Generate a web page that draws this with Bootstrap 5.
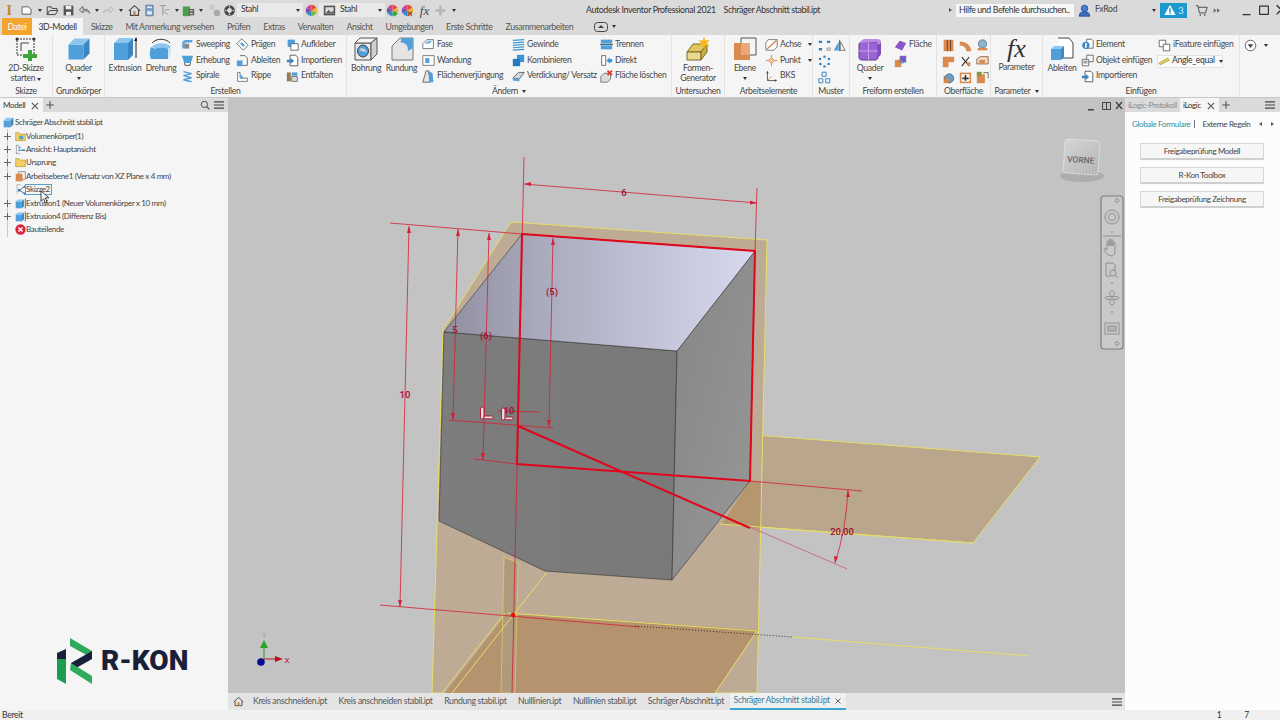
<!DOCTYPE html>
<html lang="de">
<head>
<meta charset="UTF-8">
<title>Autodesk Inventor Professional 2021</title>
<link href="https://cdn.jsdelivr.net/npm/bootstrap@5.3.0/dist/css/bootstrap.min.css" rel="stylesheet">
<style>
html, body { height: 100%; overflow: hidden; }
body { font-family: "Lato", "Liberation Sans", sans-serif; font-size: 8.6px; letter-spacing: -.3px; line-height: 1.1; color: #474747; background: #f0f0f0; }
.app-shell { width: 1280px; height: 720px; display: flex; flex-direction: column; overflow: hidden; }

/* title bar */
.title-row { height: 18px; flex: none; background: #dadada; display: grid; grid-template-columns: 465px 480px 1fr; align-items: center; padding-top: 1px; }
.qa-grid { display: grid; grid-template-columns: 18px 16px 11px 15px 17px 14px 11px 12px 13px 14px 16px 14px 12px 11px 13px 14px 16px 66px 1px 15px 66px 0 14px 17px 17px 15px 11px; align-items: center; justify-items: center; }
.qa-grid svg { width: 13px; height: 13px; }
.app-mark { font-family: "Liberation Serif", serif; font-weight: 700; font-size: 15px; line-height: 14px; color: #c9862e; }
.qa-fx { font-family: "Liberation Serif", serif; font-style: italic; font-size: 13px; line-height: 13px; letter-spacing: 0; }
.mat-box { width: 66px; height: 14px; background: #e9e9e9; display: flex; align-items: center; justify-content: space-between; padding: 0 3px 0 4px; justify-self: stretch; color: #333; }
.title-text { padding-left: 121px; display: flex; gap: 8px; font-size: 8.8px; letter-spacing: -.38px; color: #333; white-space: nowrap; }
.top-right { display: flex; align-items: center; height: 18px; color: #444; }
.search-hint { width: 118px; height: 13px; background: #f7f7f7; margin-left: 4px; padding-left: 3px; display: flex; align-items: center; font-size: 8.8px; letter-spacing: -.4px; color: #333; white-space: nowrap; }
.tri { display: inline-block; width: 0; height: 0; border-left: 2.5px solid transparent; border-right: 2.5px solid transparent; border-top: 3px solid #333; flex: none; }
.tri-r { border: 0; border-top: 2.5px solid transparent; border-bottom: 2.5px solid transparent; border-left: 3px solid #555; }
.tri-l { transform: scaleX(-1); }
.user-caret { margin-left: 35px; }
.alert-chip { width: 27px; height: 15px; background: #1c98cd; display: flex; align-items: center; justify-content: center; gap: 2px; color: #cfeaf7; font-size: 10px; }
.win-btns { margin-left: 19px; display: flex; gap: 3px; }
.win-btns svg { width: 14px; height: 14px; }

/* ribbon tabs */
.tab-row { height: 17px; flex: none; background: #dadada; display: flex; align-items: stretch; padding-left: 2px; font-size: 8.8px; letter-spacing: -.4px; color: #555; white-space: nowrap; }
.tab-file { width: 30px; background: #f2a42c; color: #fff; display: flex; align-items: center; justify-content: center; }
.tab-on { width: 51px; background: #f5f5f5; color: #333; display: flex; align-items: center; justify-content: center; margin-right: 8px; }
.tab-links { display: flex; gap: 13px; align-items: center; }

/* ribbon */
.ribbon { height: 63px; flex: none; background: #f5f5f5; border-bottom: 1px solid #c8c8c8; display: grid; grid-template-columns: 53px 52px 242px 325px 53px 88px 37px 87px 54px 52px 197px 1fr; }
.rb-panel { display: flex; flex-direction: column; border-right: 1px solid #e2e2e2; min-width: 0; }
.rb-panel:last-child { border-right: 0; }
.rb-body { height: 49px; flex: none; display: flex; align-items: stretch; white-space: nowrap; }
.rb-label { height: 13px; text-align: center; color: #444; display: flex; align-items: center; justify-content: center; gap: 4px; padding-top: 2px; }
.big-tool { display: flex; flex-direction: column; align-items: center; padding-top: 2px; flex: none; text-align: center; line-height: 10px; }
.big-tool svg { width: 24px; height: 24px; margin-bottom: 2px; }
.tool-col { display: flex; flex-direction: column; padding-top: 2px; flex: none; }
.tool-row { height: 16px; display: flex; align-items: center; gap: 2px; }
.tool-row svg { width: 13px; height: 13px; flex: none; }
.tool-row .tri { margin-left: 5px; }
.w-38 { width: 38px; } .w-40 { width: 40px; } .w-33 { width: 33px; } .w-32 { width: 32px; }
.c-181 { margin-left: 4px; width: 55px; } .c-236 { width: 50px; }
.c-fase { margin-left: 4px; width: 90px; } .c-gewinde { width: 88px; }
.c-insert { width: 77px; }
.ic-grid { display: grid; grid-template-columns: repeat(3, 17px); grid-auto-rows: 16px; align-items: center; justify-items: center; padding: 2px 0 0 3px; }
.ic-grid svg { width: 13px; height: 13px; }
.mu-grid { display: grid; grid-template-columns: 15px 15px; grid-auto-rows: 16px; align-items: center; justify-items: center; padding: 2px 0 0 4px; }
.mu-grid svg { width: 13px; height: 13px; }
.fx-big { font-family: "Liberation Serif", serif; font-style: italic; font-size: 26px; letter-spacing: 0; line-height: 24px; height: 25px; color: #333; }
.angle-box { width: 66px; height: 13px; border: 1px solid #e2e2e2; background: #fafafa; display: flex; align-items: center; gap: 2px; margin-left: -1px; color: #333; }
.angle-box svg { width: 12px; height: 10px; }
.angle-box .tri { margin-left: 2px; }

/* workspace */
.workspace { flex: 1; display: flex; min-height: 0; }
.browser-pane { width: 228px; flex: none; background: #f5f5f5; display: flex; flex-direction: column; font-size: 8px; letter-spacing: -.35px; }
.pane-head { height: 14px; flex: none; background: #dadada; display: flex; align-items: stretch; }
.pane-tab { background: #f5f5f5; display: flex; align-items: center; gap: 5px; padding: 1px 3px 0 3px; color: #333; }
.pane-tab svg, .pane-head svg { width: 10px; height: 10px; flex: none; }
.pane-add { display: flex; align-items: center; padding-left: 2px; }
.tree-list { padding: 4px 0 0 0; flex: 1; position: relative; }
.tree-row { height: 13.4px; display: flex; align-items: center; color: #444; white-space: nowrap; }
.tree-root { padding-left: 3px; gap: 1px; }
.tree-gutter { width: 15px; height: 100%; flex: none; display: flex; align-items: center; justify-content: center; background: linear-gradient(#c9c9c9, #c9c9c9) 7px 0 / 1px 100% no-repeat; }
.tree-plus { width: 7px; height: 7px; margin-right: 1px; background: linear-gradient(#666, #666) center / 7px 1px no-repeat, linear-gradient(#666, #666) center / 1px 7px no-repeat; }
.tree-row svg { width: 11px; height: 11px; flex: none; }
.tree-name { padding: 0 1px 0 0; }
.tree-hit { border: 1px solid #5a9ec9; line-height: 9px; margin-left: -1px; }
.mouse-pointer { position: absolute; left: 40px; top: 78px; width: 9px; height: 14px; }
.logo-wrap { display: flex; align-items: center; gap: 9px; padding: 0 0 26px 57px; color: #19213a; }
.logo-wrap svg { width: 35px; height: 46px; }
.logo-name { font-family: "Roboto", sans-serif; font-weight: 900; font-size: 28px; letter-spacing: 0; line-height: 1; }

.center-pane { flex: 1; min-width: 0; display: flex; flex-direction: column; }
.model-space { flex: 1; min-height: 0; background: #c3c3c3; letter-spacing: 0; }
.model-space svg { display: block; width: 100%; height: 100%; }
.doc-tabs { height: 17px; flex: none; background: #e4e4e4; display: flex; align-items: stretch; color: #555; white-space: nowrap; }
.doc-home { width: 21px; display: flex; align-items: center; justify-content: center; }
.doc-home svg { width: 11px; height: 11px; }
.doc-list { display: flex; align-items: center; gap: 11.500px; padding-left: 4px; }
.doc-on { align-self: stretch; background: #f0f0f0; border-bottom: 2px solid #3da6cf; color: #2f7f9d; display: flex; align-items: center; gap: 4px; padding: 0 4px; margin-left: -6px; }
.doc-on svg { width: 8px; height: 8px; }
.doc-menu { margin-left: auto; display: flex; align-items: center; padding-right: 3px; }
.doc-menu svg { width: 10px; height: 10px; }

.logic-pane { width: 155px; flex: none; background: #fcfcfc; display: flex; flex-direction: column; font-size: 8px; letter-spacing: -.35px; }
.logic-tab-off { color: #8a8a8a; display: flex; align-items: center; padding: 1px 3px 0; }
.logic-head-r { margin-left: auto; display: flex; align-items: center; padding-right: 5px; }
.logic-links { display: flex; align-items: center; height: 24px; padding-left: 7px; white-space: nowrap; }
.link-teal { color: #2f8f9f; }
.link-sep { width: 1px; height: 8px; background: #777; margin: 0 7px 0 4px; }
.link-arrows { display: flex; gap: 9px; margin-left: 9px; }
.logic-btns { display: flex; flex-direction: column; gap: 7px; padding: 7px 16px 0 15px; }
.logic-btn { font-size: 8px; letter-spacing: -.35px; line-height: 1; height: 17px; padding: 0; color: #444; background: #f6f6f6; border: 1px solid #d6d6d6; border-bottom: 2px solid #cfcfcf; border-radius: 1px; }

.status-row { height: 10px; flex: none; background: #f0f0f0; display: flex; color: #333; padding: 0 0 0 2px; line-height: 10px; }
.status-nums { margin-left: auto; display: flex; gap: 23px; padding-right: 31px; }
</style>
</head>
<body>
<svg class="d-none">
  <symbol id="cube" viewBox="0 0 16 16"><path fill="#4f9fdb" d="M1 5h10v10H1z"/><path fill="#8cc6ee" d="M1 5l4-4h10l-4 4z"/><path fill="#3a86c2" d="M11 5l4-4v10l-4 4z"/></symbol>
  <symbol id="doc" viewBox="0 0 16 16"><path fill="#fbfbfb" stroke="#444" d="M2.500 3.500h8l3 3v6h-11z"/></symbol>
  <symbol id="open" viewBox="0 0 16 16"><path fill="none" stroke="#444" stroke-width="1.200" d="M1.500 13V3.500h5l1 2h6V8M1.500 13l3-5h10l-3 5z"/></symbol>
  <symbol id="save" viewBox="0 0 16 16"><path fill="#555" d="M2 2h12v12H2z"/><path fill="#eee" d="M4.500 2.500h7v4h-7zM5 9.500h6V14H5z"/></symbol>
  <symbol id="undo" viewBox="0 0 16 16"><path fill="none" stroke="#666" stroke-width="1.200" d="M6 3L1.500 7 6 11V8.500h4c2 0 4 1 4 3 0-3-2-5-5-5H6z"/></symbol>
  <symbol id="redo" viewBox="0 0 16 16"><path fill="none" stroke="#bbb" stroke-width="1.200" d="M10 3l4.500 4L10 11V8.500H6c-2 0-4 1-4 3 0-3 2-5 5-5h3z"/></symbol>
  <symbol id="home" viewBox="0 0 16 16"><path fill="none" stroke="#444" stroke-width="1.300" d="M1 8.500L8 2l7 6.500M3 7.500V14h10V7.500"/><path fill="#c58a4a" d="M6.500 9h3v5h-3z"/></symbol>
  <symbol id="docblue" viewBox="0 0 16 16"><path fill="#7da5c9" stroke="#55718b" d="M3.500 1.500h9v13h-9z"/><path fill="#e5eef6" d="M5 3h6v2H5zM5 9h6v4H5z"/></symbol>
  <symbol id="figure" viewBox="0 0 16 16"><path fill="none" stroke="#9a9a9a" stroke-width="1.200" d="M2 2h8M6 2v12M6 8l6 5M9 7h5"/></symbol>
  <symbol id="greendoc" viewBox="0 0 16 16"><path fill="#4aa04a" d="M1 3h9v12H1z"/><path fill="#666" d="M8 6h7v8H8z"/><path fill="#fff" d="M10 8h3v1h-3zM10 11h3v1h-3z"/></symbol>
  <symbol id="fade" viewBox="0 0 16 16"><path fill="#c8c8c8" d="M2 1h6v6H2z"/><circle cx="11" cy="11" r="4" fill="#aaa"/></symbol>
  <symbol id="gear" viewBox="0 0 16 16"><circle cx="8" cy="8" r="6.500" fill="#444"/><circle cx="8" cy="8" r="3" fill="#ddd"/><g fill="#ddd"><circle cx="8" cy="3.500" r="1"/><circle cx="8" cy="12.500" r="1"/><circle cx="3.500" cy="8" r="1"/><circle cx="12.500" cy="8" r="1"/></g></symbol>
  <symbol id="wheel" viewBox="0 0 16 16"><path fill="#e8483c" d="M8 8V1a7 7 0 0 1 6 3.500z"/><path fill="#f2b32c" d="M8 8l6-3.500A7 7 0 0 1 14 11.500z"/><path fill="#7ab648" d="M8 8l6 3.500A7 7 0 0 1 8 15z"/><path fill="#2d8fd0" d="M8 8v7a7 7 0 0 1-6-3.500z"/><path fill="#7b4fa8" d="M8 8l-6 3.500a7 7 0 0 1 0-7z"/><path fill="#d4468c" d="M8 8L2 4.500A7 7 0 0 1 8 1z"/></symbol>
  <symbol id="matpic" viewBox="0 0 16 16"><path fill="#555" d="M1 2h14v12H1z"/><path fill="#ddd" d="M3 4h10v8H3z"/><path fill="#666" d="M3 12l4-5 3 3 3-2v4z"/></symbol>
  <symbol id="wheelplus" viewBox="0 0 16 16"><use href="#wheel"/><path fill="#2aa52a" d="M10 9h2v2h2v2h-2v2h-2v-2H8v-2h2z"/></symbol>
  <symbol id="wheelx" viewBox="0 0 16 16"><use href="#wheel"/><path fill="#b33" d="M9 9l2 2 2-2 1 1-2 2 2 2-1 1-2-2-2 2-1-1 2-2-2-2z"/></symbol>
  <symbol id="plusgrey" viewBox="0 0 16 16"><path fill="#b5b5b5" d="M6.500 2h3v4.500H14v3H9.500V14h-3V9.500H2v-3h4.500z"/></symbol>
  <symbol id="user" viewBox="0 0 16 16"><circle cx="8" cy="5.500" r="4" fill="#4a7fd0" stroke="#22468f"/><path fill="#3b6cc0" stroke="#22468f" d="M1.500 15c0-4 2.500-5.500 6.500-5.500s6.500 1.500 6.500 5.500z"/></symbol>
  <symbol id="warn" viewBox="0 0 16 16"><path fill="#fff" d="M8 1l7.500 13.500H.5z"/><path fill="#1c98cd" d="M7 5.500h2V11H7zM7 11.800h2v1.500H7z"/></symbol>
  <symbol id="cart" viewBox="0 0 16 16"><path fill="none" stroke="#333" d="M1 2h2.500l2 9h7.500l2-7H4"/><circle cx="6.500" cy="13.500" r="1" fill="#333"/><circle cx="12" cy="13.500" r="1" fill="#333"/></symbol>
  <symbol id="dblr" viewBox="0 0 16 16"><path fill="#666" d="M3 4l5 4-5 4zM9 4l5 4-5 4z"/></symbol>
  <symbol id="wmin" viewBox="0 0 16 16"><path fill="#333" d="M3 12.500h9v1.500H3z"/></symbol>
  <symbol id="wmax" viewBox="0 0 16 16"><path fill="none" stroke="#333" stroke-width="1.300" d="M3 3.500h10v9.500H3z"/></symbol>
  <symbol id="wclose" viewBox="0 0 16 16"><path fill="none" stroke="#333" stroke-width="1.600" d="M3 2.500l10.500 10.500M13.500 2.500L3 13"/></symbol>
  <symbol id="close-thin" viewBox="0 0 16 16"><path fill="none" stroke="#555" stroke-width="1.800" d="M3 3l10 10M13 3L3 13"/></symbol>
  <symbol id="plus-thin" viewBox="0 0 16 16"><path fill="none" stroke="#555" stroke-width="1.800" d="M8 2v12M2 8h12"/></symbol>
  <symbol id="find" viewBox="0 0 16 16"><circle cx="7" cy="7" r="5" fill="none" stroke="#444" stroke-width="1.500"/><path stroke="#444" stroke-width="1.800" d="M10.500 10.500L15 15"/></symbol>
  <symbol id="burger" viewBox="0 0 16 16"><path fill="#444" d="M0 2h16v1.800H0zM0 7h16v1.800H0zM0 12h16v1.800H0z"/></symbol>

  <symbol id="sk2d" viewBox="0 0 24 24"><path fill="none" stroke="#333" stroke-dasharray="2 1" d="M3 2h17v16H3z"/><path fill="none" stroke="#444" d="M7 14V6h8"/><circle cx="3" cy="2" r="1.500" fill="#333"/><circle cx="20" cy="2" r="1.500" fill="#333"/><path fill="#3aa63a" d="M14 13h4v4h5v4h-5v3h-4v-3H9v-4h5z"/></symbol>
  <symbol id="extrude" viewBox="0 0 24 24"><path fill="#4f9fdb" d="M1 6h14v17H1z"/><path fill="#8cc6ee" d="M1 6l5-5h14l-5 5z"/><path fill="#3a86c2" d="M15 6l5-5v17l-5 5z"/><path stroke="#222" fill="none" d="M23 21V2"/><path fill="#222" d="M23 0l-2 4h4z"/></symbol>
  <symbol id="revolve" viewBox="0 0 24 24"><path fill="#8cc6ee" d="M3 10c3-5 15-5 19 0l-3 2c-3-2-11-2-13 0z"/><path fill="#4f9fdb" d="M2 10l4 2c-.5 1 0 1 0 3v7H2c-2-4-1-9 0-12z"/><path fill="#4f9fdb" d="M6 12c3-2 10-2 13 0v10H6z"/><path fill="#cfe4f5" d="M19 12l3-2v7l-3 5z"/><path fill="none" stroke="#333" d="M3 6c4-5 14-5 18 0"/></symbol>
  <symbol id="sweep" viewBox="0 0 16 16"><path fill="none" stroke="#5aa5dc" stroke-width="3" d="M3 13V7c0-2 1-3 3-3h8"/><path fill="#888" d="M4 7h6v6H4z"/></symbol>
  <symbol id="loft" viewBox="0 0 16 16"><path fill="#4f9fdb" d="M1 2h14l-3 9H4z"/><path fill="none" stroke="#333" d="M4 11l1 3h6l1-3"/></symbol>
  <symbol id="coil" viewBox="0 0 16 16"><path fill="none" stroke="#4f9fdb" stroke-width="1.700" d="M3 2l10 2.500L3 7l10 2.500L3 12l10 2.500"/></symbol>
  <symbol id="emboss" viewBox="0 0 16 16"><path fill="#fff" stroke="#555" d="M1 7l6-6 8 8-6 6z"/><path fill="#5aa5dc" d="M5 7l2-2 4 4-2 2z"/></symbol>
  <symbol id="derive" viewBox="0 0 16 16"><path fill="none" stroke="#555" d="M5 2h6l3 3v9H8"/><path fill="#4f9fdb" d="M1 8h7v7H1z"/></symbol>
  <symbol id="rib" viewBox="0 0 16 16"><path fill="#fff" stroke="#666" d="M2 14V3h3v7h9v4z"/><path fill="#5aa5dc" d="M5 10V5l5 5z"/></symbol>
  <symbol id="decal" viewBox="0 0 16 16"><path fill="#4f9fdb" d="M2 2h9v9H2z"/><path fill="#fff" stroke="#555" d="M6 7h9v8H6z"/></symbol>
  <symbol id="import" viewBox="0 0 16 16"><path fill="#fff" stroke="#444" d="M5 1.500h7l2.500 2.500v10.500H5z"/><path fill="#3a86c2" d="M1 7h5V5l4 3.500-4 3.500v-2H1z"/></symbol>
  <symbol id="unfold" viewBox="0 0 16 16"><path fill="#9a7a55" d="M1 3h5v11H1z"/><path fill="#4f9fdb" d="M7 3h7v4H7z"/><path fill="#d9d9d9" stroke="#666" d="M7 8h7v6H7z"/></symbol>
  <symbol id="hole" viewBox="0 0 24 24"><path fill="#e9e9e9" stroke="#555" d="M1 6h16v17H1z"/><path fill="#f4f4f4" stroke="#555" d="M1 6l5-5h17l-6 5z"/><path fill="#d0d0d0" stroke="#555" d="M17 6l6-5v16l-6 6z"/><ellipse cx="9" cy="14" rx="5.500" ry="6" fill="#4f9fdb" stroke="#444"/><path fill="#d0d0d0" d="M5 13c2-3 6-2 8 2-3 0-5-1-8-2z"/></symbol>
  <symbol id="fillet" viewBox="0 0 24 24"><path fill="#e4e4e4" stroke="#777" d="M2 9L10 1h13v22H2z"/><path fill="#5aa5dc" d="M11 1h12v8c0-4-2-4-5-3s-8-1-7-5z"/><path fill="#4f9fdb" d="M14 1c6-.5 9 4 9 10l-5 3c0-6-2-8-8-9z"/></symbol>
  <symbol id="chamfer" viewBox="0 0 16 16"><path fill="#fff" stroke="#666" d="M1 7l5-5h8v11H1z"/><path fill="#7db7e3" d="M3 7l4-3.500h6L9 7z"/></symbol>
  <symbol id="shell" viewBox="0 0 16 16"><path fill="#fff" stroke="#666" d="M1 2h14v12H1z"/><path fill="#4f9fdb" d="M4 5h5v6H4z"/></symbol>
  <symbol id="draft" viewBox="0 0 16 16"><path fill="#e4e4e4" stroke="#555" d="M1 15L5 1h3l2 14z"/><path fill="#4f9fdb" d="M8 1l5 3 1 11h-4z"/></symbol>
  <symbol id="thread" viewBox="0 0 16 16"><path fill="none" stroke="#3f93d0" stroke-width="1.500" d="M1 3l14-1M1 6l14-1M1 9l14-1M1 12l14-1M1 15l14-1"/></symbol>
  <symbol id="combine" viewBox="0 0 16 16"><path fill="#3a94d8" d="M6 1h9v9H6z"/><path fill="#2479bd" d="M1 6h9v9H1z"/></symbol>
  <symbol id="thicken" viewBox="0 0 16 16"><path fill="#cfd9e2" stroke="#555" d="M1 10l7-7h7l-6 8z"/><path fill="#5aa5dc" d="M1 10l8 1v3l-8-1z"/></symbol>
  <symbol id="split" viewBox="0 0 16 16"><path fill="#4f9fdb" d="M1 2h14v5H1z"/><path fill="#444" d="M0 7.500h16v1H0z"/><path fill="#4f9fdb" d="M1 9h14v5H1z"/></symbol>
  <symbol id="direct" viewBox="0 0 16 16"><path fill="#fff" stroke="#555" d="M2 2h5v12H2z"/><path fill="#3a94d8" d="M8 8l4-4v2h3v4h-3v2z"/></symbol>
  <symbol id="delface" viewBox="0 0 16 16"><path fill="#ddd" stroke="#666" d="M1 8l4-4h8v7l-4 4H1z"/><path fill="#d9342b" d="M10 0l2 2 2-2 1.500 1.500-2 2 2 2L14 7l-2-2-2 2-1.500-1.500 2-2-2-2z"/></symbol>
  <symbol id="shapegen" viewBox="0 0 24 24"><path fill="#e0c75e" stroke="#7a6a2a" d="M1 15l6-8h14l-6 8z"/><path fill="#e9d98e" stroke="#7a6a2a" d="M1 15h14v8H1z"/><path fill="#c9ae46" stroke="#7a6a2a" d="M15 15l6-8v8l-6 8z"/><path fill="#f5b81e" d="M18 0l1.500 3.500L23.500 3 21 6l2.500 3-4-.5L18 12l-1.500-3.500-4 .5L15 6l-2.500-3 4 .5z"/></symbol>
  <symbol id="plane" viewBox="0 0 24 24"><path fill="none" stroke="#555" d="M8 1h15v17H8z"/><path fill="#db8a4f" d="M1 6h16v17H1z"/><path fill="#eba87a" d="M8 6h9v12H8z"/></symbol>
  <symbol id="axis" viewBox="0 0 16 16"><path fill="#fff" stroke="#666" d="M4 2h11v9L11 15H1V6z"/><path stroke="#d57a3d" stroke-width="1.500" d="M2 14L14 3"/></symbol>
  <symbol id="point" viewBox="0 0 16 16"><path fill="none" stroke="#d98a4c" stroke-width="1.200" d="M8 1v14M1 8h14"/><path fill="#efc4a0" stroke="#d98a4c" d="M8 4l4 4-4 4-4-4z"/></symbol>
  <symbol id="ucs" viewBox="0 0 16 16"><path fill="none" stroke="#444" d="M3 13V3M3 13h10"/><path fill="#444" d="M3 1L1.500 4h3zM15 13l-3-1.500v3z"/><path stroke="#d57a3d" d="M3 13l5-5"/></symbol>
  <symbol id="rect-pat" viewBox="0 0 16 16"><g fill="#2e7fc0"><path d="M1 2h4v3H1zM11 2h4v3h-4zM1 11h4v3H1z"/></g><path fill="#ddd" stroke="#999" d="M11 11h4v3h-4z"/></symbol>
  <symbol id="mirror" viewBox="0 0 16 16"><path fill="#4f9fdb" d="M1 14L7 3v11z"/><path fill="none" stroke="#666" d="M9 14V3l6 11z"/><path stroke="#555" d="M8 1v14"/></symbol>
  <symbol id="circ-pat" viewBox="0 0 16 16"><g fill="#2e7fc0"><circle cx="8" cy="2" r="1.500"/><circle cx="13.500" cy="5" r="1.500"/><circle cx="2.500" cy="5" r="1.500"/><circle cx="13" cy="11" r="1.500"/><circle cx="3" cy="11" r="1.500"/><circle cx="8" cy="14" r="1.500"/></g></symbol>
  <symbol id="sk-pat" viewBox="0 0 16 16"><path fill="none" stroke="#3a86c2" stroke-width="1.200" d="M5 1.500h5v5H5zM1 9.500h5v5H1zM9.500 9.500h5v5h-5z"/></symbol>
  <symbol id="free" viewBox="0 0 24 24"><path fill="#9b63d6" stroke="#5a3a8a" d="M1 8c0-2 1-3 3-3h13c2 0 3 1 3 3v12c0 2-1 3-3 3H4c-2 0-3-1-3-3z"/><path fill="#b98be4" d="M2 6c1-3 3-4 5-4h12c3 0 4 1 4 3L20 7c0-1-1-2-3-2z"/><path fill="#7f4cc0" d="M20 8l3-3v11c0 2-1 3-3 4z"/><path stroke="#c9a6ec" d="M10.500 5v18M1 14h19"/></symbol>
  <symbol id="ff-face" viewBox="0 0 16 16"><path fill="#8a55c8" d="M1 10l6-8 8 3-5 9z"/></symbol>
  <symbol id="ff-conv" viewBox="0 0 16 16"><path fill="#8a55c8" d="M7 1h8v8H7z"/><path fill="#db8a4f" d="M1 6h8v9H1z"/><circle cx="10" cy="7" r="3" fill="none" stroke="#2a7fb8"/></symbol>
  <symbol id="sf1" viewBox="0 0 16 16"><path fill="#d98a50" d="M2 1h12v14H2z"/><path fill="#5d3a1c" d="M6 1h1v14H6zM10 1h1v14h-1z"/></symbol>
  <symbol id="sf2" viewBox="0 0 16 16"><path fill="#d98a50" d="M1 3c8 0 14 5 14 12h-6C9 11 6 8 1 8z"/></symbol>
  <symbol id="sf3" viewBox="0 0 16 16"><circle cx="8" cy="6" r="5" fill="#8fb5c9" stroke="#5a7a8c"/><path fill="#d98a50" d="M2 11h12v3H2z"/></symbol>
  <symbol id="sf4" viewBox="0 0 16 16"><path fill="#d98a50" d="M1 2h14v7H8v6H1z"/></symbol>
  <symbol id="sf5" viewBox="0 0 16 16"><path fill="#333" d="M4 2l4 5 4-5 1 1-4 5 4 5-1 1-4-5-4 5-1-1 4-5-4-5z"/><path fill="#d98a50" d="M10 9h4v4h-4z"/></symbol>
  <symbol id="sf6" viewBox="0 0 16 16"><path fill="#f0d9c5" stroke="#8a5a30" d="M1 5l4-3h10v9H1z"/><path fill="#d98a50" d="M4 6h7v4H4z"/></symbol>
  <symbol id="sf7" viewBox="0 0 16 16"><path fill="#d98a50" d="M2 6h8v9H2z"/><circle cx="9" cy="9" r="5.500" fill="#6a9ec7" stroke="#3d6f94"/><path fill="#d98a50" d="M4 9h5v5H4z"/></symbol>
  <symbol id="sf8" viewBox="0 0 16 16"><path fill="#d98a50" d="M1 2h14v13H1z"/><path fill="#fff" d="M3 4h10v9H3z"/><path fill="#333" d="M7 5h2v3h3v2H9v2H7v-2H4V8h3z"/></symbol>
  <symbol id="sf9" viewBox="0 0 16 16"><path fill="#d98a50" d="M1 4h10v11H1z"/><path fill="#7d9b3a" d="M1 1h6v5H1z"/><path fill="none" stroke="#555" d="M9 2h6v7"/></symbol>
  <symbol id="derive-l" viewBox="0 0 24 24"><path fill="#fff" stroke="#444" d="M8 1h11l4 5v15H10"/><path fill="#4f9fdb" d="M1 12h10v11H1z"/><path fill="#8cc6ee" d="M1 12l3-3h10l-3 3z"/><path fill="#3a86c2" d="M11 12l3-3v11l-3 3z"/></symbol>
  <symbol id="element" viewBox="0 0 16 16"><path fill="#fff" stroke="#555" d="M7 1.500h6l2 2v9H7z"/><circle cx="6" cy="9" r="4.500" fill="#3a86c2"/><path fill="#fff" d="M5 6h2v6H5z"/></symbol>
  <symbol id="object" viewBox="0 0 16 16"><path fill="#fff" stroke="#555" d="M7 1.500h8v8H7z"/><path fill="#fff" stroke="#555" d="M1.500 6.500h8v8h-8z"/><path stroke="#555" d="M3 9h5M3 11h5"/></symbol>
  <symbol id="ifeature" viewBox="0 0 16 16"><path fill="#fff" stroke="#555" d="M1.500 1.500h8v8h-8z"/><path fill="#fff" stroke="#555" d="M6.500 6.500h8v8h-8z"/></symbol>
  <symbol id="ruler" viewBox="0 0 16 12"><path fill="#e4d45c" stroke="#a8983a" d="M1 9l12-7 2 3-12 6z"/></symbol>
  <symbol id="more" viewBox="0 0 16 16"><circle cx="8" cy="8" r="6.500" fill="#fff" stroke="#444"/><path fill="#444" d="M4.500 6.500h7L8 11z"/></symbol>

  <symbol id="folder" viewBox="0 0 16 16"><path fill="#f0cf63" stroke="#b7973e" d="M1 14V2.500h5l1.500 2h7.500V14z"/></symbol>
  <symbol id="solids" viewBox="0 0 16 16"><use href="#folder"/><path fill="#4f9fdb" d="M6 7h6v5H6z"/></symbol>
  <symbol id="view" viewBox="0 0 16 16"><path fill="none" stroke="#555" stroke-dasharray="2 1" d="M2 2h4M2 2v12h5"/><path fill="#3a86c2" d="M5 4h3v2H5zM9 8h6v2H9zM5 8h3v2H5z"/></symbol>
  <symbol id="wplane" viewBox="0 0 16 16"><path fill="none" stroke="#666" d="M5 1h10v11H5z"/><path fill="#db8a4f" d="M1 4h10v11H1z"/></symbol>
  <symbol id="sketch" viewBox="0 0 16 16"><path fill="none" stroke="#777" stroke-dasharray="2 1" d="M3 1h6M3 1v13"/><path fill="none" stroke="#2e6ea6" stroke-width="1.300" d="M6 9l8-5M6 9l8 5"/><circle cx="6" cy="9" r="1.800" fill="#2e6ea6"/><circle cx="14" cy="4" r="1.600" fill="#2e6ea6"/><circle cx="14" cy="14" r="1.600" fill="#2e6ea6"/></symbol>
  <symbol id="extr-tree" viewBox="0 0 16 16"><path fill="#4f9fdb" d="M1 5h9v10H1z"/><path fill="#8cc6ee" d="M1 5l3-3h9l-3 3z"/><path fill="#3a86c2" d="M10 5l3-3v10l-3 3z"/><path stroke="#222" d="M15 15V1"/></symbol>
  <symbol id="endpart" viewBox="0 0 16 16"><circle cx="8" cy="8" r="7.500" fill="#d7263d"/><path stroke="#fff" stroke-width="2" d="M5 5l6 6M11 5l-6 6"/></symbol>
  <symbol id="ptr" viewBox="0 0 10 16"><path fill="#fff" stroke="#222" d="M1 1v12l3-3 2 5 2-1-2-5h4z"/></symbol>
  <symbol id="rkon" viewBox="0 0 35 46"><path fill="#2dab5b" d="M13 0L35 13V20L13 8z"/><path fill="#19213a" d="M35 13V21L14 33V25z"/><path fill="#2dab5b" d="M14 25L35 38V46L13 32z"/><path fill="#19213a" d="M0 15L9 11V21H0z"/><path fill="#1c9e50" d="M0 21H9V46L0 41z"/></symbol>
</svg>

<div class="app-shell">

  <div class="title-row">
    <div class="qa-grid">
      <span class="app-mark">I</span>
      <svg><use href="#doc"/></svg><span class="tri"></span>
      <svg><use href="#open"/></svg>
      <svg><use href="#save"/></svg>
      <svg><use href="#undo"/></svg><span class="tri"></span>
      <svg><use href="#redo"/></svg><span class="tri"></span>
      <svg><use href="#home"/></svg>
      <svg><use href="#docblue"/></svg>
      <svg><use href="#figure"/></svg><span class="tri"></span>
      <svg><use href="#greendoc"/></svg><span class="tri"></span>
      <svg><use href="#fade"/></svg>
      <svg><use href="#gear"/></svg>
      <div class="mat-box"><span>Stahl</span><span class="tri"></span></div>
      <span></span>
      <svg><use href="#wheel"/></svg>
      <div class="mat-box"><svg><use href="#matpic"/></svg><span class="me-auto ms-1">Stahl</span><span class="tri"></span></div>
      <span></span>
      <svg><use href="#wheelplus"/></svg>
      <svg><use href="#wheelx"/></svg>
      <span class="qa-fx">fx</span>
      <svg><use href="#plusgrey"/></svg>
      <span class="tri"></span>
    </div>
    <div class="title-text"><span>Autodesk Inventor Professional 2021</span><span>Schräger Abschnitt stabil.ipt</span></div>
    <div class="top-right">
      <span class="tri tri-r ms-1"></span>
      <div class="search-hint">Hilfe und Befehle durchsuchen..</div>
      <svg class="ms-1" width="13" height="13"><use href="#user"/></svg>
      <span class="ms-1">FxRod</span>
      <span class="tri user-caret"></span>
      <div class="alert-chip ms-1"><svg width="12" height="12"><use href="#warn"/></svg>3</div>
      <svg class="ms-2" width="13" height="13"><use href="#cart"/></svg>
      <svg class="ms-1" width="9" height="9"><use href="#dblr"/></svg>
      <div class="win-btns"><svg><use href="#wmin"/></svg><svg><use href="#wmax"/></svg><svg><use href="#wclose"/></svg></div>
    </div>
  </div>

  <div class="tab-row">
    <div class="tab-file">Datei</div>
    <div class="tab-on">3D-Modell</div>
    <div class="tab-links">
      <span>Skizze</span><span>Mit Anmerkung versehen</span><span>Prüfen</span><span>Extras</span><span>Verwalten</span><span>Ansicht</span><span>Umgebungen</span><span>Erste Schritte</span><span>Zusammenarbeiten</span>
      <span class="d-flex align-items-center gap-1 ms-2"><svg width="14" height="10" viewBox="0 0 14 10"><rect x=".5" y=".5" width="13" height="9" rx="3" fill="none" stroke="#444"/><path fill="#444" d="M4 6h6L7 3z"/></svg><span class="tri"></span></span>
    </div>
  </div>

  <div class="ribbon">
    <div class="rb-panel">
      <div class="rb-body justify-content-center"><div class="big-tool"><svg><use href="#sk2d"/></svg><span>2D-Skizze</span><span>starten <span class="tri"></span></span></div></div>
      <div class="rb-label">Skizze</div>
    </div>
    <div class="rb-panel">
      <div class="rb-body justify-content-center"><div class="big-tool"><svg><use href="#cube"/></svg><span>Quader</span><span class="tri mt-1"></span></div></div>
      <div class="rb-label">Grundkörper</div>
    </div>
    <div class="rb-panel">
      <div class="rb-body">
        <div class="big-tool w-40"><svg><use href="#extrude"/></svg><span>Extrusion</span></div>
        <div class="big-tool w-32"><svg><use href="#revolve"/></svg><span>Drehung</span></div>
        <div class="tool-col c-181">
          <div class="tool-row"><svg><use href="#sweep"/></svg>Sweeping</div>
          <div class="tool-row"><svg><use href="#loft"/></svg>Erhebung</div>
          <div class="tool-row"><svg><use href="#coil"/></svg>Spirale</div>
        </div>
        <div class="tool-col c-236">
          <div class="tool-row"><svg><use href="#emboss"/></svg>Prägen</div>
          <div class="tool-row"><svg><use href="#derive"/></svg>Ableiten</div>
          <div class="tool-row"><svg><use href="#rib"/></svg>Rippe</div>
        </div>
        <div class="tool-col">
          <div class="tool-row"><svg><use href="#decal"/></svg>Aufkleber</div>
          <div class="tool-row"><svg><use href="#import"/></svg>Importieren</div>
          <div class="tool-row"><svg><use href="#unfold"/></svg>Entfalten</div>
        </div>
      </div>
      <div class="rb-label">Erstellen</div>
    </div>
    <div class="rb-panel">
      <div class="rb-body">
        <div class="big-tool w-38"><svg><use href="#hole"/></svg><span>Bohrung</span></div>
        <div class="big-tool w-33"><svg><use href="#fillet"/></svg><span>Rundung</span></div>
        <div class="tool-col c-fase">
          <div class="tool-row"><svg><use href="#chamfer"/></svg>Fase</div>
          <div class="tool-row"><svg><use href="#shell"/></svg>Wandung</div>
          <div class="tool-row"><svg><use href="#draft"/></svg>Flächenverjüngung</div>
        </div>
        <div class="tool-col c-gewinde">
          <div class="tool-row"><svg><use href="#thread"/></svg>Gewinde</div>
          <div class="tool-row"><svg><use href="#combine"/></svg>Kombinieren</div>
          <div class="tool-row"><svg><use href="#thicken"/></svg>Verdickung/ Versatz</div>
        </div>
        <div class="tool-col">
          <div class="tool-row"><svg><use href="#split"/></svg>Trennen</div>
          <div class="tool-row"><svg><use href="#direct"/></svg>Direkt</div>
          <div class="tool-row"><svg><use href="#delface"/></svg>Fläche löschen</div>
        </div>
      </div>
      <div class="rb-label">Ändern <span class="tri"></span></div>
    </div>
    <div class="rb-panel">
      <div class="rb-body justify-content-center"><div class="big-tool"><svg><use href="#shapegen"/></svg><span>Formen-</span><span>Generator</span></div></div>
      <div class="rb-label">Untersuchen</div>
    </div>
    <div class="rb-panel">
      <div class="rb-body">
        <div class="big-tool w-40"><svg><use href="#plane"/></svg><span>Ebene</span><span class="tri mt-1"></span></div>
        <div class="tool-col">
          <div class="tool-row"><svg><use href="#axis"/></svg>Achse<span class="tri"></span></div>
          <div class="tool-row"><svg><use href="#point"/></svg>Punkt<span class="tri"></span></div>
          <div class="tool-row"><svg><use href="#ucs"/></svg>BKS</div>
        </div>
      </div>
      <div class="rb-label">Arbeitselemente</div>
    </div>
    <div class="rb-panel">
      <div class="rb-body"><div class="mu-grid"><svg><use href="#rect-pat"/></svg><svg><use href="#mirror"/></svg><svg><use href="#circ-pat"/></svg><span></span><svg><use href="#sk-pat"/></svg></div></div>
      <div class="rb-label">Muster</div>
    </div>
    <div class="rb-panel">
      <div class="rb-body">
        <div class="big-tool w-40"><svg><use href="#free"/></svg><span>Quader</span><span class="tri mt-1"></span></div>
        <div class="tool-col ms-1">
          <div class="tool-row"><svg><use href="#ff-face"/></svg>Fläche</div>
          <div class="tool-row"><svg><use href="#ff-conv"/></svg></div>
        </div>
      </div>
      <div class="rb-label">Freiform erstellen</div>
    </div>
    <div class="rb-panel">
      <div class="rb-body"><div class="ic-grid">
        <svg><use href="#sf1"/></svg><svg><use href="#sf2"/></svg><svg><use href="#sf3"/></svg>
        <svg><use href="#sf4"/></svg><svg><use href="#sf5"/></svg><svg><use href="#sf6"/></svg>
        <svg><use href="#sf7"/></svg><svg><use href="#sf8"/></svg><svg><use href="#sf9"/></svg>
      </div></div>
      <div class="rb-label">Oberfläche</div>
    </div>
    <div class="rb-panel">
      <div class="rb-body justify-content-center"><div class="big-tool"><span class="fx-big">fx</span><span>Parameter</span></div></div>
      <div class="rb-label">Parameter <span class="tri"></span></div>
    </div>
    <div class="rb-panel">
      <div class="rb-body">
        <div class="big-tool w-38"><svg><use href="#derive-l"/></svg><span>Ableiten</span></div>
        <div class="tool-col c-insert">
          <div class="tool-row"><svg><use href="#element"/></svg>Element</div>
          <div class="tool-row"><svg><use href="#object"/></svg>Objekt einfügen</div>
          <div class="tool-row"><svg><use href="#import"/></svg>Importieren</div>
        </div>
        <div class="tool-col">
          <div class="tool-row"><svg><use href="#ifeature"/></svg>iFeature einfügen</div>
          <div class="tool-row"><div class="angle-box"><svg><use href="#ruler"/></svg>Angle_equal<span class="tri"></span></div></div>
        </div>
      </div>
      <div class="rb-label">Einfügen</div>
    </div>
    <div class="rb-panel">
      <div class="rb-body"><div class="tool-col ms-1"><div class="tool-row"><svg><use href="#more"/></svg><span class="tri"></span></div></div></div>
    </div>
  </div>

  <div class="workspace">
    <div class="browser-pane">
      <div class="pane-head">
        <div class="pane-tab">Modell <svg><use href="#close-thin"/></svg></div>
        <div class="pane-add"><svg><use href="#plus-thin"/></svg></div>
        <div class="ms-auto d-flex align-items-center gap-1 pe-1"><svg><use href="#find"/></svg><svg><use href="#burger"/></svg></div>
      </div>
      <div class="tree-list">
        <div class="tree-row tree-root"><svg><use href="#cube"/></svg><span>Schräger Abschnitt stabil.ipt</span></div>
        <div class="tree-row"><div class="tree-gutter"><span class="tree-plus"></span></div><svg><use href="#solids"/></svg><span class="tree-name">Volumenkörper(1)</span></div>
        <div class="tree-row"><div class="tree-gutter"><span class="tree-plus"></span></div><svg><use href="#view"/></svg><span class="tree-name">Ansicht: Hauptansicht</span></div>
        <div class="tree-row"><div class="tree-gutter"><span class="tree-plus"></span></div><svg><use href="#folder"/></svg><span class="tree-name">Ursprung</span></div>
        <div class="tree-row"><div class="tree-gutter"><span class="tree-plus"></span></div><svg><use href="#wplane"/></svg><span class="tree-name">Arbeitsebene1 (Versatz von XZ Plane x 4 mm)</span></div>
        <div class="tree-row"><div class="tree-gutter"></div><svg><use href="#sketch"/></svg><span class="tree-name tree-hit">Skizze2</span></div>
        <div class="tree-row"><div class="tree-gutter"><span class="tree-plus"></span></div><svg><use href="#extr-tree"/></svg><span class="tree-name">Extrusion1 (Neuer Volumenkörper x 10 mm)</span></div>
        <div class="tree-row"><div class="tree-gutter"><span class="tree-plus"></span></div><svg><use href="#extr-tree"/></svg><span class="tree-name">Extrusion4 (Differenz Bis)</span></div>
        <div class="tree-row"><div class="tree-gutter"></div><svg><use href="#endpart"/></svg><span class="tree-name">Bauteilende</span></div>
        <svg class="mouse-pointer"><use href="#ptr"/></svg>
      </div>
      <div class="logo-wrap"><svg><use href="#rkon"/></svg><span class="logo-name">R-KON</span></div>
    </div>

    <div class="center-pane">
      <div class="model-space">
        <svg viewBox="228 98 897 595">
          <defs>
            <linearGradient id="gTop" x1="0" y1="0" x2="1" y2="0"><stop offset="0" stop-color="#8f8fa0"/><stop offset=".35" stop-color="#adadc0"/><stop offset="1" stop-color="#d8d9ee"/></linearGradient>
            <linearGradient id="gFront" x1="0" y1="0" x2="1" y2="0"><stop offset="0" stop-color="#7d7d7d"/><stop offset="1" stop-color="#797979"/></linearGradient>
            <linearGradient id="gRight" x1="0" y1="0" x2="1" y2="1"><stop offset="0" stop-color="#858586"/><stop offset="1" stop-color="#989899"/></linearGradient>
            <linearGradient id="gCube" x1="0" y1="0" x2="1" y2="1"><stop offset="0" stop-color="#d4d4d4"/><stop offset="1" stop-color="#b6b6b6"/></linearGradient>
          </defs>
          <rect x="228" y="98" width="897" height="595" fill="#c3c3c3"/>

          <!-- Arbeitsebenen -->
          <polygon points="755,435 1040,457 973,543 757,527" fill="#b9a68d" stroke="#e6de66"/>
          <polygon points="443,330 511,222 767,240 757,693 432,693" fill="#bdab95" stroke="#e6de66"/>
          <polygon points="507,613 757,630 715,693 445,693" fill="#b5936f"/>
          <polygon points="504,557 518,563 515,693 501,693" fill="#b09a7d" stroke="#e6de66" stroke-width=".6"/>
          <polygon points="750,481 761,482 760,529 722,524" fill="#b5966f"/>
          <path fill="none" stroke="#e6de66" d="M720 524L973 543M547 572L452 693M505 613L442 693M507 613L757 631L715 693"/>
          <path fill="none" stroke="#e6de66" d="M792 637L1030 656"/>

          <!-- Körper -->
          <polygon points="444,332 677,351 672,580 545,571 439,521" fill="url(#gFront)" stroke="#333" stroke-width=".6"/>
          <polygon points="677,351 755,251 750,481 672,580" fill="url(#gRight)" stroke="#333" stroke-width=".6"/>
          <polygon points="522,234 755,251 677,351 444,332" fill="url(#gTop)" stroke="#333" stroke-width=".6"/>

          <!-- Skizze -->
          <g fill="none" stroke="#d42035" stroke-width=".8">
            <path d="M524 157L512 693M757 188L755 251M390 223L522 234M449 420L553 428M474 459L517 464M750 481L862 491"/>
            <path d="M524 184L757 203M409 226L400 607M458 229L453 420M489 233L483 460M553 238L549 427M497 411L540 412M380 605L640 627"/>
            <path stroke="#c85a7a" d="M750 527L847 569"/>
            <path d="M848 490Q846 530 835 563"/>
          </g>
          <path d="M635 626L792 637" fill="none" stroke="#3a3020" stroke-width="1" stroke-dasharray="1 2"/>
          <g fill="#d42035">
            <path d="M524 184l7 -2v4zM757 203l-7 -2.500v4zM409 226l-2 7h4zM400 607l-2 -7h4zM458 229l-2 7h4zM453 420l-2 -7h4zM489 233l-2 7h4zM483 460l-2 -7h4zM553 238l-2 7h4zM549 427l-2 -7h4zM848 490l-2 7h4zM835 563l-1 -7 4 1z"/>
            <circle cx="513" cy="615" r="2.200" fill="#f00"/>
          </g>
          <g fill="none" stroke="#e1061b" stroke-width="2">
            <path d="M522 234L755 251L750 481L517 464Z"/>
            <path d="M518 426L750 528"/>
          </g>
          <g font-family="Roboto, sans-serif" font-size="9.500" font-weight="500" fill="#a0102a" text-anchor="middle">
            <text x="624" y="196">6</text>
            <text x="405" y="398">10</text>
            <text x="455" y="333">5</text>
            <text x="486" y="339">(6)</text>
            <text x="552" y="295">(5)</text>
            <text x="842" y="535">20,00</text>
            <text x="509" y="414">10</text>
          </g>
          <g fill="#e8dcdc" stroke="#a8102a" stroke-width=".9">
            <rect x="480.500" y="407" width="3.500" height="12" rx="1.700"/>
            <rect x="484" y="416" width="9" height="2.800" rx="1.400"/>
            <rect x="501.500" y="408" width="3.500" height="12" rx="1.700"/>
            <rect x="505" y="417" width="8" height="2.800" rx="1.400"/>
          </g>

          <!-- Koordinatensymbol -->
          <path stroke="#3aa63a" stroke-width="1.200" d="M264 659V646"/>
          <path fill="#2ca52c" d="M264 640l-4 8h8z"/>
          <path stroke="#b33" stroke-width="1.200" d="M264 659H276"/>
          <path fill="#c01020" d="M283 659l-8 -3v6z"/>
          <circle cx="261" cy="662" r="3.800" fill="#0a0a90"/>
          <text x="264" y="638" font-size="7" fill="#86b486" text-anchor="middle" font-family="Roboto, sans-serif">Y</text>
          <text x="287" y="663" font-size="8" fill="#c01030" text-anchor="middle" font-family="Roboto, sans-serif">X</text>

          <!-- Fenster-Knöpfe -->
          <path fill="#444" d="M1088 109h6v1.500h-6z"/>
          <path fill="none" stroke="#444" d="M1102.500 102.500h8v7h-8zM1106.500 102.500v7"/>
          <path fill="none" stroke="#444" stroke-width="1.400" d="M1116 102l6 7M1122 102l-6 7"/>

          <!-- ViewCube -->
          <ellipse cx="1082" cy="176" rx="22" ry="6" fill="#9f9f9f" opacity=".6"/>
          <g transform="rotate(4 1082 158)">
            <rect x="1064" y="140" width="35" height="34" rx="3" fill="url(#gCube)" stroke="#e6e6e6" stroke-dasharray="2 1"/>
            <text x="1081" y="163" font-family="Roboto, sans-serif" font-size="8.500" fill="#6a6a6a" text-anchor="middle" font-weight="500">VORNE</text>
          </g>

          <!-- Navigationsleiste -->
          <rect x="1101" y="196" width="22" height="153" rx="3" fill="#c9c9c9" stroke="#7f7f7f" stroke-width="1.200"/>
          <g fill="none" stroke="#8f8f8f">
            <circle cx="1112" cy="217" r="7"/><circle cx="1112" cy="217" r="3.500"/>
            <path d="M1103 236h18"/>
            <path d="M1108 255c-2-2-4-5-4-6s2-1 3 1v-8a1 1 0 0 1 2 0v4v-6a1 1 0 0 1 2 0v6v-5a1 1 0 0 1 2 0v5v-3a1 1 0 0 1 2 0v8c0 3-1 4-3 5z"/>
            <path d="M1106 263h7l2 2v5h-2M1106 263v13h5"/>
            <circle cx="1113" cy="273" r="3"/><path d="M1115 275l3 3"/>
            <path d="M1112 291c3 0 3 4 0 6c4-1 7 0 7 1s-3 2-7 1c3 2 3 6 0 6c-3 0-3-4 0-6c-4 1-7 0-7-1s3-2 7-1c-3-2-3-6 0-6z"/>
            <rect x="1105" y="323" width="14" height="11" /><rect x="1108" y="326" width="8" height="5" fill="#b5b5b5"/>
            <circle cx="1117" cy="200.500" r="1.800"/><circle cx="1117" cy="343.500" r="1.800"/>
          </g>
          <g fill="#999"><circle cx="1112" cy="232" r="1"/><circle cx="1112" cy="283" r="1"/><circle cx="1112" cy="312" r="1"/></g>
        </svg>
      </div>
      <div class="doc-tabs">
        <div class="doc-home"><svg><use href="#home"/></svg></div>
        <div class="doc-list">
          <span>Kreis anschneiden.ipt</span><span>Kreis anschneiden stabil.ipt</span><span>Rundung stabil.ipt</span><span>Nulllinien.ipt</span><span>Nulllinien stabil.ipt</span><span>Schräger Abschnitt.ipt</span>
          <div class="doc-on">Schräger Abschnitt stabil.ipt <svg><use href="#close-thin"/></svg></div>
        </div>
        <div class="doc-menu"><svg><use href="#burger"/></svg></div>
      </div>
    </div>

    <div class="logic-pane">
      <div class="pane-head">
        <div class="logic-tab-off">iLogic-Protokoll</div>
        <div class="pane-tab">iLogic <svg><use href="#close-thin"/></svg></div>
        <div class="pane-add"><svg><use href="#plus-thin"/></svg></div>
        <div class="logic-head-r"><svg><use href="#burger"/></svg></div>
      </div>
      <div class="logic-links">
        <span class="link-teal">Globale Formulare</span><span class="link-sep"></span><span>Externe Regeln</span>
        <span class="link-arrows"><span class="tri tri-r tri-l"></span><span class="tri tri-r"></span></span>
      </div>
      <div class="logic-btns">
        <button type="button" class="btn logic-btn">Freigabeprüfung Modell</button>
        <button type="button" class="btn logic-btn">R-Kon Toolbox</button>
        <button type="button" class="btn logic-btn">Freigabeprüfung Zeichnung</button>
      </div>
    </div>
  </div>

  <div class="status-row"><span>Bereit</span><div class="status-nums"><span>1</span><span>7</span></div></div>
</div>
<script src="https://cdn.jsdelivr.net/npm/bootstrap@5.3.0/dist/js/bootstrap.bundle.min.js"></script>
</body>
</html>
